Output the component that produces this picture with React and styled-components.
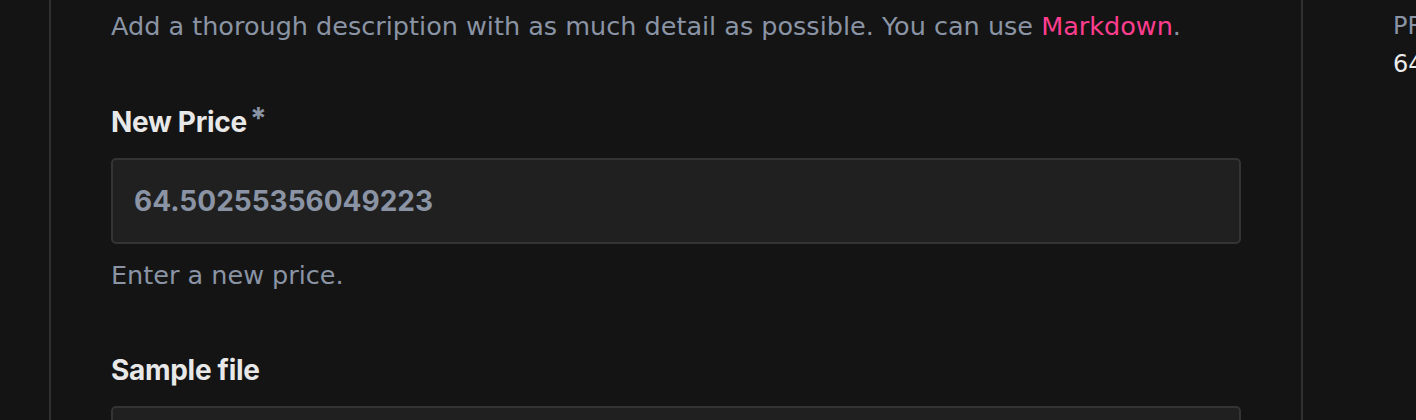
import React from "react";
import styled, { createGlobalStyle } from "styled-components";

const GlobalStyle = createGlobalStyle`
  html, body { margin: 0; padding: 0; background: #141414; }
  body { overflow: hidden; font-family: "DejaVu Sans", sans-serif; }
`;

const Page = styled.div`
  display: grid;
  grid-template-columns: 49px 1254px 1fr;
  height: 420px;
  overflow: hidden;
  background: #141414;
`;

const Side = styled.div``;

const Main = styled.main`
  border-left: 2px solid #303030;
  border-right: 2px solid #303030;
  padding: 8px 60px 0;
  display: flex;
  flex-direction: column;
`;

const Field = styled.div`
  display: flex;
  flex-direction: column;
  margin-top: ${p => p.$top}px;
`;

const Hint = styled.p`
  margin: 0;
  font-family: "DejaVu Sans", sans-serif;
  font-size: 25.5px;
  line-height: 36px;
  color: #8a94a5;
  white-space: nowrap;
  margin-top: ${p => p.$gap || 0}px;
`;

const Link = styled.a`
  color: #ff3d8f;
  text-decoration: none;
`;

const Label = styled.label`
  display: block;
  height: 36px;
  font-family: Inter, sans-serif;
  font-weight: 700;
  font-size: 28px;
  line-height: 36px;
  color: #e8e8e8;
  letter-spacing: -0.3px;
  margin-bottom: 18px;
`;

const Required = styled.span`
  color: #8a94a5;
  font-size: 30px;
  line-height: 0;
  vertical-align: 3px;
  margin-left: 3px;
`;

const Input = styled.input`
  box-sizing: border-box;
  width: 100%;
  height: 86px;
  margin: 0;
  padding: 0 21px;
  background: #202020;
  border: 2px solid #343434;
  border-radius: 5px;
  font-family: Inter, sans-serif;
  font-weight: 700;
  font-size: 28px;
  color: #8a94a5;
  outline: none;
`;

const Aside = styled.aside`
  padding: 8px 0 0 90px;
  white-space: nowrap;
  overflow: hidden;
`;

const AsideLabel = styled.div`
  font-family: "DejaVu Sans", sans-serif;
  font-size: 24px;
  line-height: 36px;
  color: #8a94a5;
`;

const AsideValue = styled.div`
  font-family: "DejaVu Sans", sans-serif;
  font-size: 24px;
  line-height: 40px;
  color: #ececec;
`;

export default function App() {
  return (
    <>
      <GlobalStyle />
      <Page>
        <Side />
        <Main>
          <Hint>
            Add a thorough description with as much detail as possible. You can use{" "}
            <Link href="#">Markdown</Link>.
          </Hint>
          <Field $top={60}>
            <Label>
              New Price<Required>*</Required>
            </Label>
            <Input defaultValue="64.50255356049223" readOnly />
            <Hint $gap={13}>Enter a new price.</Hint>
          </Field>
          <Field $top={59}>
            <Label>Sample file</Label>
            <Input readOnly />
          </Field>
        </Main>
        <Aside>
          <AsideLabel>PRICE</AsideLabel>
          <AsideValue>64.50255356049223</AsideValue>
        </Aside>
      </Page>
    </>
  );
}
